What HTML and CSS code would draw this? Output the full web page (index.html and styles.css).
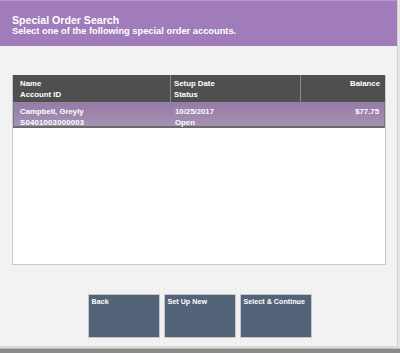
FILE: index.html
```html
<!DOCTYPE html>
<html>
<head>
<meta charset="utf-8">
<link rel="stylesheet" href="styles.css">
</head>
<body>
<div class="app">
  <div class="frame">
    <div class="header">
      <div class="title">Special Order Search</div>
      <div class="subtitle">Select one of the following special order accounts.</div>
    </div>
    <div class="main">
      <div class="table">
        <div class="thead">
          <div class="cell c1"><div>Name</div><div>Account ID</div></div>
          <div class="cell c2"><div>Setup Date</div><div>Status</div></div>
          <div class="cell c3"><div>Balance</div></div>
        </div>
        <div class="row selected">
          <div class="cell c1"><div>Campbell, Greyly</div><div class="mono">S0401003000003</div></div>
          <div class="cell c2"><div>10/25/2017</div><div>Open</div></div>
          <div class="cell c3"><div>$77.75</div></div>
        </div>
      </div>
      <div class="buttons">
        <div class="btn">Back</div>
        <div class="btn">Set Up New</div>
        <div class="btn">Select &amp; Continue</div>
      </div>
    </div>
  </div>
  <div class="bottombar"></div>
</div>
</body>
</html>
```

FILE: styles.css
```css
* { box-sizing: border-box; }
html, body { margin: 0; padding: 0; }
body {
  width: 400px;
  height: 353px;
  overflow: hidden;
  background: #e6e6e6;
  font-family: "Liberation Sans", Arial, sans-serif;
  font-weight: bold;
  color: #ffffff;
}
.app {
  width: 400px;
  height: 353px;
  display: flex;
  flex-direction: column;
}
.frame {
  flex: 1;
  width: 398px;
  display: flex;
  flex-direction: column;
  background: #f2f2f2;
  border-right: 1px solid #d2d2d2;
  border-bottom: 2px solid #dadada;
}
.header {
  height: 46px;
  background: #a07cba;
  border-top: 1px solid #b49acb;
  padding: 13px 12px 0 12px;
}
.title {
  font-size: 10.6px;
  line-height: 12px;
}
.subtitle {
  font-size: 9.3px;
  line-height: 11px;
}
.main {
  flex: 1;
  padding: 29px 12px 0 12px;
  display: flex;
  flex-direction: column;
}
.table {
  width: 374px;
  height: 190px;
  background: #ffffff;
  border: 1px solid #c9c9c9;
  border-top: none;
}
.thead {
  display: flex;
  height: 27px;
  background: #4f4f4f;
  font-size: 7.8px;
  line-height: 11px;
}
.cell {
  padding: 3px 4px 0 4px;
}
.c1 { width: 158px; padding-left: 7px; }
.c2 { width: 130px; padding-left: 3px; }
.c3 { flex: 1; text-align: right; padding-right: 5px; }
.thead .c1, .thead .c2 { border-right: 1px solid #8a8a8a; }
.row {
  display: flex;
  height: 26px;
  font-size: 7.8px;
  line-height: 11px;
}
.selected {
  background: linear-gradient(#987aab, #a592b0);
  border: 1px solid #7a7a7a;
  border-top: 1px solid #8c8c8c;
  border-bottom: 2px solid #6a6a6a;
}
.selected .c1 { padding-left: 6px; }
.mono { letter-spacing: 0.2px; }
.buttons {
  margin-top: 29px;
  display: flex;
  justify-content: center;
  gap: 4px;
  padding-left: 2px;
}
.btn {
  width: 72px;
  height: 44px;
  background: #536478;
  border: 1px solid #c2c6cc;
  font-size: 7.2px;
  line-height: 10px;
  padding: 2px 3px;
}
.bottombar {
  height: 5px;
  background: #8a8a8a;
  border-top: 1px solid #bdbdbd;
}
```
